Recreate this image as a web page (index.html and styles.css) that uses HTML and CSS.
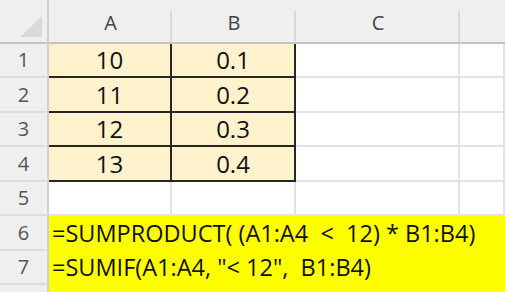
FILE: index.html
```html
<!DOCTYPE html>
<html>
<head>
<meta charset="utf-8">
<link rel="stylesheet" href="styles.css">
</head>
<body>
<div class="sheet">
  <div class="corner"><svg class="tri" width="22" height="21" viewBox="0 0 22 21"><polygon points="22,0 22,21 0,21" fill="#d9d9d9"/></svg></div>
  <div class="colhead">A</div>
  <div class="colhead">B</div>
  <div class="colhead">C</div>
  <div class="colhead last"></div>

  <div class="rowhead">1</div>
  <div class="cell data">10</div>
  <div class="cell data">0.1</div>
  <div class="cell"></div>
  <div class="cell"></div>

  <div class="rowhead">2</div>
  <div class="cell data">11</div>
  <div class="cell data">0.2</div>
  <div class="cell"></div>
  <div class="cell"></div>

  <div class="rowhead">3</div>
  <div class="cell data">12</div>
  <div class="cell data">0.3</div>
  <div class="cell"></div>
  <div class="cell"></div>

  <div class="rowhead">4</div>
  <div class="cell data">13</div>
  <div class="cell data">0.4</div>
  <div class="cell"></div>
  <div class="cell"></div>

  <div class="rowhead">5</div>
  <div class="cell"></div>
  <div class="cell"></div>
  <div class="cell"></div>
  <div class="cell"></div>

  <div class="rowhead">6</div>
  <div class="formula">=SUMPRODUCT( (A1:A4 &nbsp;&lt; &nbsp;12) * B1:B4)</div>

  <div class="rowhead">7</div>
  <div class="formula">=SUMIF(A1:A4, "&lt; 12", &nbsp;B1:B4)</div>

  <div class="rowhead"></div>
  <div class="formula"></div>
</div>
</body>
</html>
```

FILE: styles.css
```css
html, body {
  margin: 0;
  padding: 0;
  background: #ffffff;
}
body {
  width: 505px;
  height: 292px;
  overflow: hidden;
  font-family: "Open Sans", "Noto Sans", sans-serif;
}
.sheet {
  display: grid;
  grid-template-columns: 49px 123px 124px 164px 1fr;
  grid-template-rows: 44px 34px 35px 34px 35px 34px 35px 34px 20px;
  width: 505px;
}
.corner {
  background: #efefef;
  border-right: 2px solid #d0d0d0;
  border-bottom: 2px solid #c4c4c4;
  display: flex;
  justify-content: flex-end;
  align-items: flex-end;
  padding: 0 5px 5px 0;
}
.colhead {
  background: linear-gradient(#d9d9d9, #d9d9d9) right 0 bottom 0 / 2px 31px no-repeat, #efefef;
  border-bottom: 2px solid #c4c4c4;
  color: #444;
  font-size: 20px;
  display: flex;
  justify-content: center;
  align-items: center;
  padding-top: 3px;
  line-height: 1;
}
.colhead.last {
  background: #efefef;
}
.rowhead {
  background: #efefef;
  border-right: 2px solid #d0d0d0;
  border-bottom: 2px solid #dcdcdc;
  color: #555;
  font-size: 20px;
  display: flex;
  justify-content: center;
  align-items: center;
  line-height: 1;
}
.cell {
  border-right: 2px solid #e2e2e2;
  border-bottom: 2px solid #e2e2e2;
  font-size: 24px;
  display: flex;
  justify-content: center;
  align-items: center;
  line-height: 1;
  color: #111;
}
.cell.data {
  background: #fff2cc;
  border-right-color: #262626;
  border-bottom-color: #262626;
}
.formula {
  grid-column: 2 / 6;
  background: #ffff00;
  font-size: 23.5px;
  color: #111;
  display: flex;
  align-items: center;
  padding-left: 3px;
  white-space: nowrap;
  line-height: 1;
}
```
